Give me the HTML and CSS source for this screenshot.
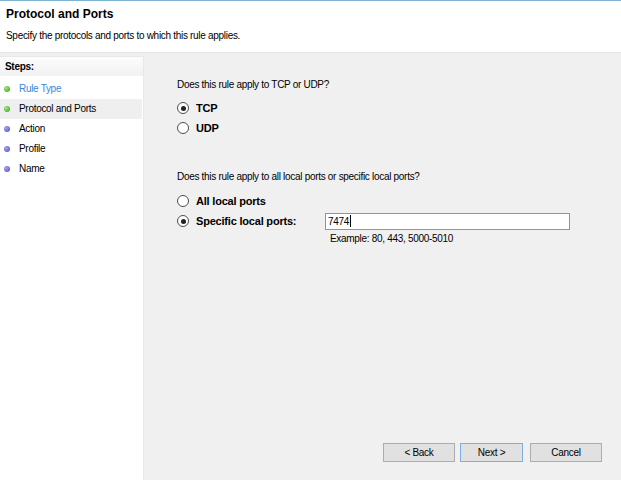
FILE: index.html
```html
<!DOCTYPE html>
<html>
<head>
<meta charset="utf-8">
<link rel="stylesheet" href="styles.css">
</head>
<body>
<div class="window">
  <header class="header">
    <div class="title">Protocol and Ports</div>
    <div class="subtitle">Specify the protocols and ports to which this rule applies.</div>
  </header>
  <div class="main">
    <aside class="steps">
      <div class="steps-head">Steps:</div>
      <ul class="step-list">
        <li class="step done link"><span class="dot green"></span>Rule Type</li>
        <li class="step done current"><span class="dot green"></span>Protocol and Ports</li>
        <li class="step"><span class="dot purple"></span>Action</li>
        <li class="step"><span class="dot purple"></span>Profile</li>
        <li class="step"><span class="dot purple"></span>Name</li>
      </ul>
    </aside>
    <section class="content">
      <div class="question q1">Does this rule apply to TCP or UDP?</div>
      <div class="options">
        <label class="option"><span class="radio checked"></span><span class="opt-label">TCP</span></label>
        <label class="option"><span class="radio"></span><span class="opt-label">UDP</span></label>
      </div>
      <div class="question q2">Does this rule apply to all local ports or specific local ports?</div>
      <div class="options opts2">
        <label class="option"><span class="radio"></span><span class="opt-label">All local ports</span></label>
        <div class="option port-row"><span class="radio checked"></span><span class="opt-label port-label">Specific local ports:</span><div class="textbox">7474<span class="caret"></span></div></div>
        <div class="example">Example: 80, 443, 5000-5010</div>
      </div>
      <div class="spacer"></div>
      <div class="buttons">
        <div class="btn">&lt; Back</div>
        <div class="btn default">Next &gt;</div>
        <div class="btn cancel">Cancel</div>
      </div>
    </section>
  </div>
</div>
</body>
</html>
```
FILE: styles.css
```css
* { box-sizing: border-box; }
html, body { margin: 0; padding: 0; }
body {
  width: 621px;
  height: 480px;
  overflow: hidden;
  background: #f0f0f0;
  font-family: "Liberation Sans", Arial, sans-serif;
  font-size: 10px;
  letter-spacing: -0.3px;
  color: #000;
}
.window {
  height: 480px;
  display: flex;
  flex-direction: column;
  border-top: 1px solid #7fb4d4;
}
.header {
  background: #fff;
  height: 52px;
  padding: 6px 0 0 6px;
  border-bottom: 1px solid #e6e6e6;
}
.title {
  font-size: 12px;
  font-weight: bold;
  letter-spacing: 0;
  line-height: 14px;
}
.subtitle {
  margin-top: 8px;
  line-height: 14px;
}
.main {
  flex: 1;
  display: flex;
  margin-top: 3px;
}
.steps {
  width: 144px;
  background: #fff;
  border: 1px solid #e8e8e8;
  border-left: none;
  border-bottom: none;
}
.steps-head {
  height: 19px;
  line-height: 19px;
  padding-left: 5px;
  font-weight: bold;
  background: linear-gradient(#fdfdfd, #f1f1f1);
  border-bottom: 1px solid #f4f4f4;
}
.step-list {
  list-style: none;
  margin: 3px 0 0;
  padding: 0;
}
.step {
  height: 20px;
  line-height: 20px;
  display: flex;
  align-items: center;
  padding-left: 4px;
  margin-right: 1px;
}
.step.link { color: #3c86dd; }
.step.current { background: #efefef; }
.dot {
  width: 6px;
  height: 6px;
  border-radius: 50%;
  margin-right: 9px;
  flex: none;
}
.dot.green { background: radial-gradient(circle at 35% 35%, #a6e87a, #2f9b1a); }
.dot.purple { background: radial-gradient(circle at 35% 35%, #a6a6f2, #4a48b8); }
.content {
  flex: 1;
  margin-left: 2px;
  background: #f0f0f0;
  display: flex;
  flex-direction: column;
  padding: 22px 19px 18px 31px;
}
.question { line-height: 14px; height: 14px; }
.options {
  margin-top: 6px;
  display: flex;
  flex-direction: column;
}
.options.opts2 { margin-top: 7px; }
.option {
  height: 20px;
  line-height: 20px;
  display: flex;
  align-items: center;
}
.radio {
  width: 12px;
  height: 12px;
  border: 1px solid #4d4d4d;
  border-radius: 50%;
  background: #fff;
  margin-right: 7px;
  position: relative;
  flex: none;
}
.radio.checked::after {
  content: "";
  position: absolute;
  left: 2.5px;
  top: 2.5px;
  width: 5px;
  height: 5px;
  border-radius: 50%;
  background: #222;
}
.opt-label {
  font-weight: bold;
  font-size: 11px;
  letter-spacing: -0.2px;
  line-height: 20px;
}
.q2 { margin-top: 32px; }
.port-label { width: 129px; }
.textbox {
  width: 245px;
  height: 17px;
  border: 1px solid #7a9bb6;
  background: #fff;
  padding-left: 2px;
  line-height: 15px;
  display: flex;
  align-items: center;
}
.caret {
  display: inline-block;
  width: 1px;
  height: 12px;
  background: #000;
  margin-left: 1px;
}
.example {
  margin-left: 153px;
  margin-top: 1px;
  line-height: 14px;
}
.spacer { flex: 1; }
.buttons {
  display: flex;
  justify-content: flex-end;
}
.btn {
  width: 72px;
  height: 19px;
  border: 1px solid #adadad;
  background: #e1e1e1;
  text-align: center;
  line-height: 17px;
}
.btn.default {
  width: 63px;
  margin-left: 5px;
  border-color: #7eaee0;
}
.btn.cancel { margin-left: 7px; }
```
